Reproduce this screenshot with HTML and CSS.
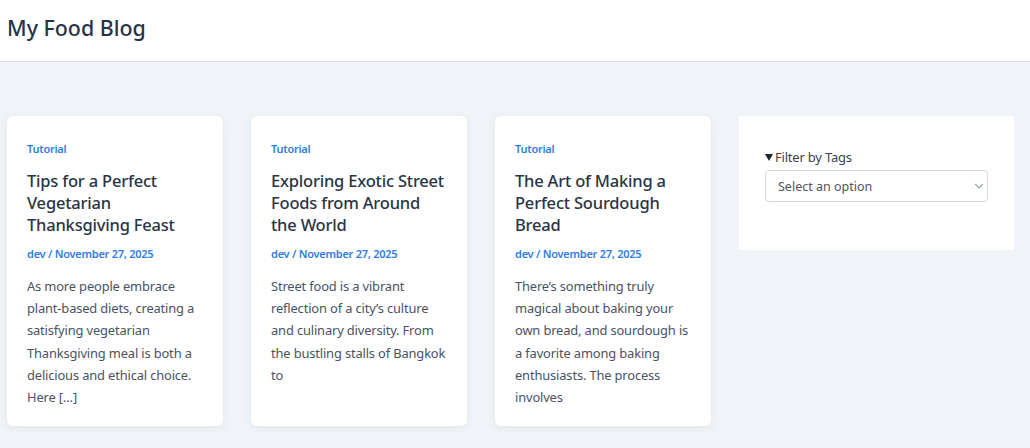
FILE: index.html
```html
<!DOCTYPE html>
<html lang="en">
<head>
<meta charset="utf-8">
<title>My Food Blog</title>
<link rel="stylesheet" href="styles.css">
</head>
<body>
<header class="site-header">
  <h1 class="site-title">My Food Blog</h1>
</header>
<main class="layout">
  <article class="card">
    <div class="card-tag">Tutorial</div>
    <h2 class="card-title">Tips for a Perfect Vegetarian Thanksgiving Feast</h2>
    <div class="card-meta">dev / November 27, 2025</div>
    <p class="card-excerpt">As more people embrace plant-based diets, creating a satisfying vegetarian Thanksgiving meal is both a delicious and ethical choice. Here […]</p>
  </article>
  <article class="card">
    <div class="card-tag">Tutorial</div>
    <h2 class="card-title">Exploring Exotic Street Foods from Around the World</h2>
    <div class="card-meta">dev / November 27, 2025</div>
    <p class="card-excerpt">Street food is a vibrant reflection of a city’s culture and culinary diversity. From the bustling stalls of Bangkok to</p>
  </article>
  <article class="card">
    <div class="card-tag">Tutorial</div>
    <h2 class="card-title">The Art of Making a Perfect Sourdough Bread</h2>
    <div class="card-meta">dev / November 27, 2025</div>
    <p class="card-excerpt">There’s something truly magical about baking your own bread, and sourdough is a favorite among baking enthusiasts. The process involves</p>
  </article>
  <aside class="sidebar">
    <details class="filter" open>
      <summary class="filter-summary">Filter by Tags</summary>
      <div class="select-wrap">
        <select class="filter-select">
          <option>Select an option</option>
        </select>
        <svg class="chev" width="10" height="6" viewBox="0 0 10 6"><path d="M1 1l4 4 4-4" fill="none" stroke="#9aa3af" stroke-width="1.2"/></svg>
      </div>
    </details>
  </aside>
</main>
</body>
</html>
```

FILE: styles.css
```css
* { box-sizing: border-box; }
html, body { margin: 0; padding: 0; }
body {
  font-family: "Noto Sans", "Open Sans", sans-serif;
  background: #f0f4f8;
  color: #2d3748;
  height: 448px;
  overflow: hidden;
}
.site-header {
  background: #fff;
  height: 62px;
  border-bottom: 1px solid #dadde1;
  display: flex;
  align-items: center;
  padding: 0 7px;
}
.site-title {
  margin: 0;
  font-size: 21.4px;
  font-weight: 500;
  color: #283347;
  line-height: 1;
  padding-bottom: 6px;
}
.layout {
  display: flex;
  align-items: stretch;
  gap: 28px;
  padding: 54px 16px 0 7px;
}
.card {
  width: 216px;
  height: 310px;
  flex: none;
  background: #fff;
  border-radius: 6px;
  box-shadow: 0 2px 8px rgba(30, 50, 80, 0.07);
  padding: 23px 20px 20px;
}
.card-tag {
  font-size: 11px;
  font-weight: 600;
  letter-spacing: -0.25px;
  color: #2f7de1;
  line-height: 20px;
}
.card-title {
  margin: 11px 0 0;
  font-size: 16.5px;
  font-weight: 500;
  letter-spacing: -0.2px;
  line-height: 22px;
  color: #2a3445;
}
.card-meta {
  margin-top: 8px;
  font-size: 11px;
  font-weight: 600;
  letter-spacing: -0.25px;
  color: #2f7de1;
  line-height: 20px;
}
.card-excerpt {
  margin: 11px 0 0;
  font-size: 12.9px;
  letter-spacing: -0.15px;
  line-height: 22.2px;
  color: #4a5264;
}
.sidebar {
  flex: 1;
  align-self: flex-start;
  height: 134px;
  background: #fff;
  padding: 31px 26px 0;
}
.filter-summary {
  font-size: 13px;
  letter-spacing: -0.2px;
  line-height: 20px;
  color: #3a4252;
  cursor: pointer;
  list-style: none;
  display: flex;
  align-items: center;
}
.filter-summary::-webkit-details-marker { display: none; }
.filter-summary::before {
  content: "";
  width: 0;
  height: 0;
  border-left: 4px solid transparent;
  border-right: 4px solid transparent;
  border-top: 7px solid #1f2733;
  margin: 0 2px 0 0;
}
.select-wrap {
  position: relative;
  margin-top: 3px;
}
.filter-select {
  -webkit-appearance: none;
  appearance: none;
  display: block;
  width: 100%;
  height: 32px;
  border: 1px solid #d3d8de;
  border-radius: 4px;
  background: #fff;
  padding: 0 12px;
  font-family: inherit;
  font-size: 12.5px;
  color: #4d5566;
}
.chev {
  position: absolute;
  right: 4px;
  top: 13px;
  pointer-events: none;
}
```
